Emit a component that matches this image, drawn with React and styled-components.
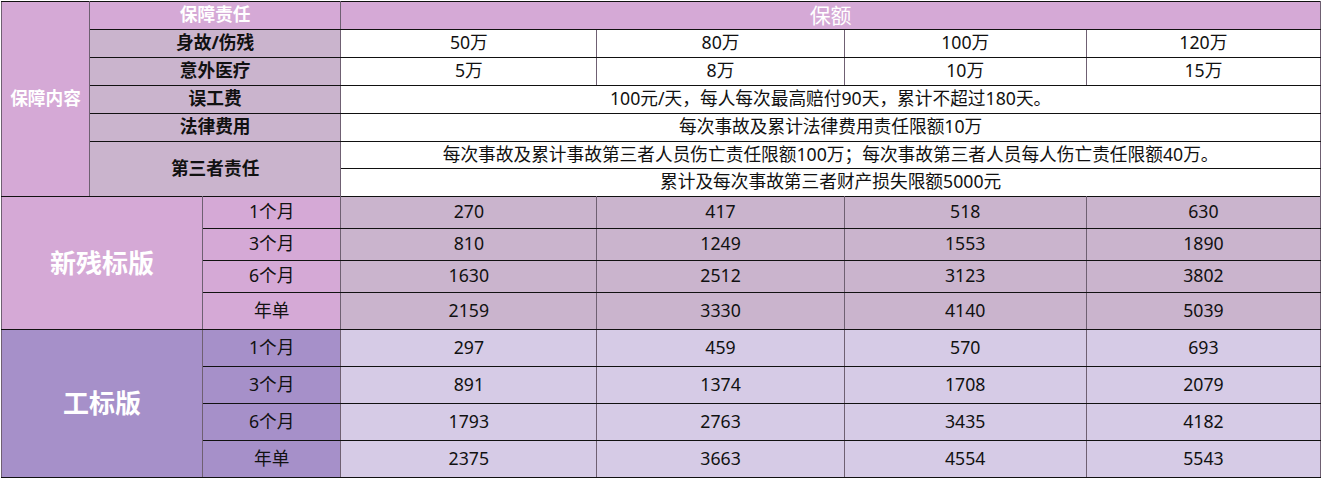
import React from "react";
import styled, { createGlobalStyle } from "styled-components";

const GlobalStyle = createGlobalStyle`
  body {
    margin: 0;
    background: #fff;
    font-family: "Noto Sans", "Noto Sans CJK SC", sans-serif;
  }
`;

const PINK = "#d5a9d6";
const MAUVE = "#cab4cd";
const VIOLET = "#a690c9";
const LILAC = "#d6cbe6";

const Table = styled.table`
  border-collapse: collapse;
  table-layout: fixed;
  width: 1320px;
  margin: 1px 0 0 1px;
  font-family: "Noto Sans", "Noto Sans CJK SC", sans-serif;
  font-size: 17.7px;
  color: #111;
  border: 1px solid #3a2f3c;
`;

const Row = styled.tr`
  height: ${(p) => p.$h}px;
`;

const Cell = styled.td`
  padding: 0 0 1px;
  text-align: center;
  vertical-align: middle;
  white-space: nowrap;
  line-height: 1;
  background: ${(p) => p.$bg || "#fff"};
  color: ${(p) => (p.$white ? "#fff" : "#111")};
  font-weight: ${(p) => (p.$bold ? 700 : 400)};
  font-size: ${(p) => (p.$size ? `${p.$size}px` : "inherit")};
  border-top: 1px solid ${(p) => p.$topColor || "#111"};
  border-bottom: 1px solid #111;
  border-left: 1px solid #6f6072;
  border-right: 1px solid #6f6072;
`;

const amounts = ["50万", "80万", "100万", "120万"];
const medical = ["5万", "8万", "10万", "15万"];

const plans = [
  {
    name: "新残标版",
    side: PINK,
    fill: MAUVE,
    heights: [32, 32, 32, 37],
    prices: [
      ["270", "417", "518", "630"],
      ["810", "1249", "1553", "1890"],
      ["1630", "2512", "3123", "3802"],
      ["2159", "3330", "4140", "5039"],
    ],
  },
  {
    name: "工标版",
    side: VIOLET,
    fill: LILAC,
    heights: [37, 37, 37, 37],
    prices: [
      ["297", "459", "570", "693"],
      ["891", "1374", "1708", "2079"],
      ["1793", "2763", "3435", "4182"],
      ["2375", "3663", "4554", "5543"],
    ],
  },
];

const periods = ["1个月", "3个月", "6个月", "年单"];

export default function App() {
  return (
    <>
      <GlobalStyle />
      <Table>
        <colgroup>
          <col style={{ width: 88 }} />
          <col style={{ width: 113 }} />
          <col style={{ width: 138 }} />
          <col style={{ width: 256 }} />
          <col style={{ width: 247 }} />
          <col style={{ width: 242 }} />
          <col style={{ width: 234 }} />
        </colgroup>
        <tbody>
          <Row $h={28}>
            <Cell rowSpan={8} $bg={PINK} $white $bold>
              保障内容
            </Cell>
            <Cell colSpan={2} $bg={PINK} $white $bold>
              保障责任
            </Cell>
            <Cell colSpan={4} $bg={PINK} $white $size={21}>
              保额
            </Cell>
          </Row>
          <Row $h={28}>
            <Cell colSpan={2} $bg={MAUVE} $bold $topColor="#8a7a8c">
              身故/伤残
            </Cell>
            {amounts.map((a) => (
              <Cell key={a} $topColor="#8a7a8c">{a}</Cell>
            ))}
          </Row>
          <Row $h={28}>
            <Cell colSpan={2} $bg={MAUVE} $bold>
              意外医疗
            </Cell>
            {medical.map((a) => (
              <Cell key={a}>{a}</Cell>
            ))}
          </Row>
          <Row $h={28}>
            <Cell colSpan={2} $bg={MAUVE} $bold>
              误工费
            </Cell>
            <Cell colSpan={4}>100元/天，每人每次最高赔付90天，累计不超过180天。</Cell>
          </Row>
          <Row $h={28}>
            <Cell colSpan={2} $bg={MAUVE} $bold>
              法律费用
            </Cell>
            <Cell colSpan={4}>每次事故及累计法律费用责任限额10万</Cell>
          </Row>
          <Row $h={27}>
            <Cell rowSpan={2} colSpan={2} $bg={MAUVE} $bold $topColor="#8a8a8a">
              第三者责任
            </Cell>
            <Cell colSpan={4} $topColor="#8a8a8a">
              每次事故及累计事故第三者人员伤亡责任限额100万；每次事故第三者人员每人伤亡责任限额40万。
            </Cell>
          </Row>
          <Row $h={28}>
            <Cell colSpan={4}>累计及每次事故第三者财产损失限额5000元</Cell>
          </Row>
          <Row $h={0} />
          {plans.map((plan) =>
            plan.prices.map((row, i) => (
              <Row key={plan.name + i} $h={plan.heights[i]}>
                {i === 0 && (
                  <Cell rowSpan={4} colSpan={2} $bg={plan.side} $white $bold $size={26}>
                    {plan.name}
                  </Cell>
                )}
                <Cell $bg={plan.side}>{periods[i]}</Cell>
                {row.map((v, j) => (
                  <Cell key={j} $bg={plan.fill}>
                    {v}
                  </Cell>
                ))}
              </Row>
            ))
          )}
        </tbody>
      </Table>
    </>
  );
}
